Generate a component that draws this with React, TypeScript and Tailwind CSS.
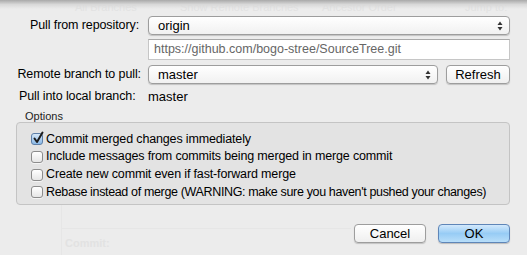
import React from "react";

const font = { fontFamily: '"Liberation Sans", Arial, sans-serif' };

function Arrows() {
  return (
    <svg width="6" height="10" viewBox="0 0 6 10" className="shrink-0">
      <path d="M3 0.5 L5.5 4 L0.5 4 Z" fill="#333" />
      <path d="M3 9.5 L5.5 6 L0.5 6 Z" fill="#333" />
    </svg>
  );
}

function Popup({ text, w }: { text: string; w: string }) {
  return (
    <div
      className={`${w} h-[19px] rounded-[4px] border border-[#9d9d9d] bg-gradient-to-b from-[#ffffff] to-[#f1f1f1] shadow-[0_1px_1px_rgba(0,0,0,0.18)] flex items-center justify-between pl-[9px] pr-[6px]`}
    >
      <span className="text-[13px] text-black leading-none">{text}</span>
      <Arrows />
    </div>
  );
}

function Checkbox({ checked }: { checked?: boolean }) {
  return (
    <div className="relative w-[13px] h-[13px] shrink-0">
      <div
        className={
          checked
            ? "w-[12px] h-[12px] mt-[1px] rounded-[3px] border border-[#5d7fa8] bg-gradient-to-b from-[#d6e8f8] to-[#8ab8e6]"
            : "w-[12px] h-[12px] mt-[1px] rounded-[3px] border border-[#8c8c8c] bg-gradient-to-b from-[#ffffff] to-[#e6e6e6] shadow-[0_1px_0_rgba(255,255,255,0.6)]"
        }
      />
      {checked && (
        <svg width="13" height="14" viewBox="0 0 13 14" className="absolute left-[1px] -top-[1px]">
          <path d="M2.5 7.5 L5 11 L10.5 1.5" stroke="#1d1d1d" strokeWidth="2" fill="none" strokeLinecap="round" strokeLinejoin="round" />
        </svg>
      )}
    </div>
  );
}

function CheckRow({ label, checked, tight }: { label: string; checked?: boolean; tight?: boolean }) {
  return (
    <div className="flex items-center h-[17.7px] gap-[2px]">
      <Checkbox checked={checked} />
      <span
        className={
          tight
            ? "text-[12.5px] tracking-[-0.35px] text-black leading-none whitespace-nowrap"
            : "text-[12.5px] tracking-[-0.15px] text-black leading-none whitespace-nowrap"
        }
      >
        {label}
      </span>
    </div>
  );
}

function Ghost() {
  const c = "absolute text-[11px] leading-none text-[#e2e2e2] whitespace-nowrap";
  return (
    <div className="absolute inset-0 pointer-events-none">
      <span className={c + " left-[75px] top-[2px]"}>All Branches</span>
      <span className={c + " left-[180px] top-[2px]"}>Show Remote Branches</span>
      <span className={c + " left-[322px] top-[2px]"}>Ancestor Order</span>
      <span className={c + " left-[465px] top-[2px]"}>Jump to:</span>
      <div className="absolute left-[61px] top-[200px] w-px h-[55px] bg-[#e6e6e6]" />
      <div className="absolute left-[61px] top-[228px] w-[290px] h-px bg-[#e6e6e6]" />
      <span className={c + " left-[65px] top-[238px] font-bold"}>Commit:</span>
    </div>
  );
}

const label = "text-[12.5px] text-black leading-none whitespace-nowrap tracking-[-0.1px]";

export default function App() {
  return (
    <div className="relative w-[527px] h-[255px] overflow-hidden bg-[#ececec]" style={font}>
      <Ghost />
      <div className="absolute left-0 right-0 top-0 h-[9px] bg-gradient-to-b from-[#a9a9a9] via-[#d9d9d9] to-transparent" />
      <div className="relative flex flex-col pt-[16px]">
        <div className="flex items-center">
          <div className={"w-[141px] text-right pr-[2px] " + label}>Pull from repository:</div>
          <div className="ml-[7px]"><Popup text="origin" w="w-[362px]" /></div>
        </div>
        <div className="ml-[148px] mt-[4px] w-[362px] h-[21px] bg-white border border-[#c6c6c6] border-t-[#a9a9a9] flex items-center pl-[5px]">
          <span className="text-[12.5px] text-[#666] leading-none">https://github.com/bogo-stree/SourceTree.git</span>
        </div>
        <div className="flex items-center mt-[5px]">
          <div className={"w-[141px] text-right " + label}>Remote branch to pull:</div>
          <div className="ml-[7px]"><Popup text="master" w="w-[290px]" /></div>
          <div className="ml-[8px] w-[64px] h-[19px] rounded-[4px] border border-[#9d9d9d] bg-gradient-to-b from-[#ffffff] to-[#efefef] shadow-[0_1px_1px_rgba(0,0,0,0.18)] flex items-center justify-center text-[13px] text-black leading-none">Refresh</div>
        </div>
        <div className="flex items-center mt-[5px] h-[14px]">
          <div className={"w-[148px] pl-[19px] " + label}>Pull into local branch:</div>
          <div className="text-[13px] text-black leading-none">master</div>
        </div>
        <div className="ml-[25px] mt-[8px] text-[11px] text-[#222] leading-none h-[11px]">Options</div>
        <div className="ml-[16px] w-[494px] h-[83px] rounded-[4px] border border-[#c4c4c4] bg-[#e3e3e3] pt-[7px] pl-[14px] flex flex-col">
          <CheckRow checked label="Commit merged changes immediately" />
          <CheckRow label="Include messages from commits being merged in merge commit" />
          <CheckRow label="Create new commit even if fast-forward merge" />
          <CheckRow tight label="Rebase instead of merge (WARNING: make sure you haven't pushed your changes)" />
        </div>
        <div className="flex justify-end mt-[19px] pr-[17px] gap-[12px]">
          <div className="w-[72px] h-[19px] rounded-[4px] border border-[#9d9d9d] bg-gradient-to-b from-[#ffffff] to-[#efefef] shadow-[0_1px_1px_rgba(0,0,0,0.18)] flex items-center justify-center text-[13px] text-black leading-none">Cancel</div>
          <div className="w-[72px] h-[19px] rounded-[4px] border border-[#5f86b8] bg-gradient-to-b from-[#d3e9fc] via-[#97ccf5] to-[#b8def9] shadow-[0_1px_1px_rgba(0,0,0,0.2)] flex items-center justify-center text-[13px] text-black leading-none">OK</div>
        </div>
      </div>
    </div>
  );
}
